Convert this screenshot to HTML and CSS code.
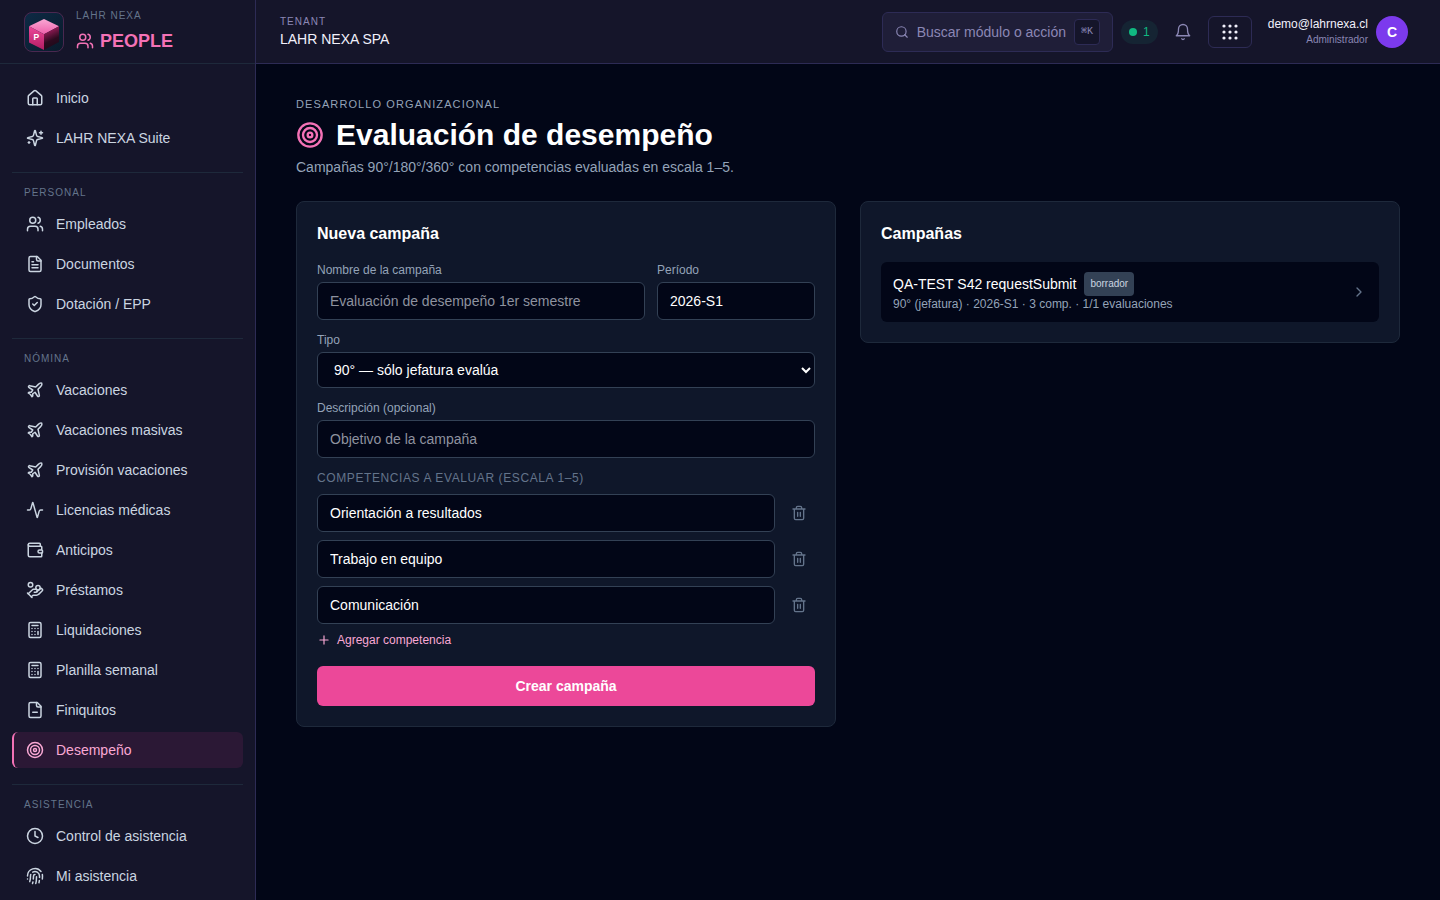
FILE: index.html
```html
<!DOCTYPE html>
<html lang="es">
<head>
  <meta charset="UTF-8">
  <title>LAHR NEXA People - Evaluación de desempeño</title>
  <link rel="stylesheet" href="styles.css">
</head>
<body>

  <!-- Shared icons -->
  <svg class="sprite" xmlns="http://www.w3.org/2000/svg">
    <symbol id="i-users" viewBox="0 0 24 24"><path d="M16 21v-2a4 4 0 0 0-4-4H6a4 4 0 0 0-4 4v2"/><circle cx="9" cy="7" r="4"/><path d="M22 21v-2a4 4 0 0 0-3-3.87"/><path d="M16 3.13a4 4 0 0 1 0 7.75"/></symbol>
    <symbol id="i-plane" viewBox="0 0 24 24"><path d="M17.8 19.2 16 11l3.5-3.5C21 6 21.5 4 21 3c-1-.5-3 0-4.5 1.5L13 8 4.8 6.2c-.5-.1-.9.1-1.1.5l-.3.5c-.2.5-.1 1 .3 1.3L9 12l-2 3H4l-1 1 3 2 2 3 1-1v-3l3-2 3.5 5.3c.3.4.8.5 1.3.3l.5-.2c.4-.3.6-.7.5-1.2z"/></symbol>
    <symbol id="i-calculator" viewBox="0 0 24 24"><rect width="16" height="20" x="4" y="2" rx="2"/><path d="M8 6h8M16 14v4M16 10h.01M12 10h.01M8 10h.01M12 14h.01M8 14h.01M12 18h.01M8 18h.01"/></symbol>
    <symbol id="i-target" viewBox="0 0 24 24"><circle cx="12" cy="12" r="10"/><circle cx="12" cy="12" r="6"/><circle cx="12" cy="12" r="2"/></symbol>
    <symbol id="i-trash" viewBox="0 0 24 24"><path d="M3 6h18M19 6v14c0 1-1 2-2 2H7c-1 0-2-1-2-2V6M8 6V4c0-1 1-2 2-2h4c1 0 2 1 2 2v2M10 11v6M14 11v6"/></symbol>
  </svg>

  <div class="layout">
    <aside class="sidebar">
      <div class="brand">
        <svg class="logo" viewBox="0 0 40 40">
          <defs>
            <linearGradient id="logoBg" x1="0" y1="0" x2="1" y2="1">
              <stop offset="0" stop-color="#0d2a45"/><stop offset="1" stop-color="#0a1a2a"/>
            </linearGradient>
            <linearGradient id="cubeTop" x1="0" y1="0" x2="0" y2="1">
              <stop offset="0" stop-color="#f9a8d4"/><stop offset="1" stop-color="#ee5faa"/>
            </linearGradient>
            <linearGradient id="cubeLeft" x1="0" y1="0" x2="0" y2="1">
              <stop offset="0" stop-color="#ec4899"/><stop offset="1" stop-color="#b01c62"/>
            </linearGradient>
            <linearGradient id="cubeRight" x1="0.3" y1="0" x2="0.6" y2="1">
              <stop offset="0.1" stop-color="#a01c5c"/><stop offset="0.6" stop-color="#2c0a1f"/><stop offset="1" stop-color="#1a0a18"/>
            </linearGradient>
          </defs>
          <rect class="logo-frame" x="0.5" y="0.5" width="39" height="39" rx="7.5"/>
          <path fill="url(#cubeTop)" d="M20 7 35 14.3 20 22.3 5 14.3z"/>
          <path fill="url(#cubeLeft)" d="M5 14.3 20 22.3V38L5 30.5z"/>
          <path fill="url(#cubeRight)" d="M35 14.3 20 22.3V38L35 30z"/>
          <text class="logo-letter" x="9.6" y="28.3">P</text>
        </svg>
        <div>
          <div class="brand-over">LAHR NEXA</div>
          <div class="brand-name">
            <svg class="icon"><use href="#i-users"/></svg>PEOPLE
          </div>
        </div>
      </div>

      <nav class="nav">
        <div class="nav-group">
          <a class="nav-item"><svg class="icon" viewBox="0 0 24 24"><path d="M15 21v-8a1 1 0 0 0-1-1h-4a1 1 0 0 0-1 1v8"/><path d="M3 10a2 2 0 0 1 .709-1.528l7-5.999a2 2 0 0 1 2.582 0l7 5.999A2 2 0 0 1 21 10v9a2 2 0 0 1-2 2H5a2 2 0 0 1-2-2z"/></svg>Inicio</a>
          <a class="nav-item"><svg class="icon" viewBox="0 0 24 24"><path d="M9.937 15.5A2 2 0 0 0 8.5 14.063l-6.135-1.582a.5.5 0 0 1 0-.962L8.5 9.936A2 2 0 0 0 9.937 8.5l1.582-6.135a.5.5 0 0 1 .963 0L14.063 8.5A2 2 0 0 0 15.5 9.937l6.135 1.581a.5.5 0 0 1 0 .964L15.5 14.063a2 2 0 0 0-1.437 1.437l-1.582 6.135a.5.5 0 0 1-.963 0z"/><path d="M20 3v4M22 5h-4M4 17v2M5 18H3"/></svg>LAHR NEXA Suite</a>
        </div>

        <div class="nav-group">
          <div class="nav-title">Personal</div>
          <a class="nav-item"><svg class="icon"><use href="#i-users"/></svg>Empleados</a>
          <a class="nav-item"><svg class="icon" viewBox="0 0 24 24"><path d="M15 2H6a2 2 0 0 0-2 2v16a2 2 0 0 0 2 2h12a2 2 0 0 0 2-2V7Z"/><path d="M14 2v4a2 2 0 0 0 2 2h4M10 9H8M16 13H8M16 17H8"/></svg>Documentos</a>
          <a class="nav-item"><svg class="icon" viewBox="0 0 24 24"><path d="M20 13c0 5-3.5 7.5-7.66 8.95a1 1 0 0 1-.67-.01C7.5 20.5 4 18 4 13V6a1 1 0 0 1 1-1c2 0 4.5-1.2 6.24-2.72a1.17 1.17 0 0 1 1.52 0C14.51 3.81 17 5 19 5a1 1 0 0 1 1 1z"/><path d="m9 12 2 2 4-4"/></svg>Dotación / EPP</a>
        </div>

        <div class="nav-group">
          <div class="nav-title">Nómina</div>
          <a class="nav-item"><svg class="icon"><use href="#i-plane"/></svg>Vacaciones</a>
          <a class="nav-item"><svg class="icon"><use href="#i-plane"/></svg>Vacaciones masivas</a>
          <a class="nav-item"><svg class="icon"><use href="#i-plane"/></svg>Provisión vacaciones</a>
          <a class="nav-item"><svg class="icon" viewBox="0 0 24 24"><path d="M22 12h-2.48a2 2 0 0 0-1.93 1.46l-2.35 8.36a.25.25 0 0 1-.48 0L9.24 2.18a.25.25 0 0 0-.48 0l-2.35 8.36A2 2 0 0 1 4.49 12H2"/></svg>Licencias médicas</a>
          <a class="nav-item"><svg class="icon" viewBox="0 0 24 24"><path d="M19 7V4a1 1 0 0 0-1-1H5a2 2 0 0 0 0 4h15a1 1 0 0 1 1 1v4h-3a2 2 0 0 0 0 4h3a1 1 0 0 0 1-1v-2a1 1 0 0 0-1-1"/><path d="M3 5v14a2 2 0 0 0 2 2h15a1 1 0 0 0 1-1v-4"/></svg>Anticipos</a>
          <a class="nav-item"><svg class="icon" viewBox="0 0 24 24"><path d="M11 15h2a2 2 0 1 0 0-4h-3c-.6 0-1.1.2-1.4.6L3 17"/><path d="m7 21 1.6-1.4c.3-.4.8-.6 1.4-.6h4c1.1 0 2.1-.4 2.8-1.2l4.6-4.4a2 2 0 0 0-2.75-2.91l-4.2 3.9"/><path d="m2 16 6 6"/><circle cx="16" cy="9" r="2.9"/><circle cx="6" cy="5" r="3"/></svg>Préstamos</a>
          <a class="nav-item"><svg class="icon"><use href="#i-calculator"/></svg>Liquidaciones</a>
          <a class="nav-item"><svg class="icon"><use href="#i-calculator"/></svg>Planilla semanal</a>
          <a class="nav-item"><svg class="icon" viewBox="0 0 24 24"><path d="M15 2H6a2 2 0 0 0-2 2v16a2 2 0 0 0 2 2h12a2 2 0 0 0 2-2V7Z"/><path d="M14 2v4a2 2 0 0 0 2 2h4M9 15h6"/></svg>Finiquitos</a>
          <a class="nav-item active"><svg class="icon"><use href="#i-target"/></svg>Desempeño</a>
        </div>

        <div class="nav-group">
          <div class="nav-title">Asistencia</div>
          <a class="nav-item"><svg class="icon" viewBox="0 0 24 24"><circle cx="12" cy="12" r="10"/><path d="M12 6v6l4 2"/></svg>Control de asistencia</a>
          <a class="nav-item"><svg class="icon" viewBox="0 0 24 24"><path d="M12 10a2 2 0 0 0-2 2c0 1.02-.1 2.51-.26 4"/><path d="M14 13.12c0 2.38 0 6.38-1 8.88"/><path d="M17.29 21.02c.12-.6.43-2.3.5-3.02"/><path d="M2 12a10 10 0 0 1 18-6"/><path d="M2 16h.01"/><path d="M21.8 16c.2-2 .131-5.354 0-6"/><path d="M5 19.5C5.5 18 6 15 6 12a6 6 0 0 1 .34-2"/><path d="M8.65 22c.21-.66.45-1.32.57-2"/><path d="M9 6.8a6 6 0 0 1 9 5.2v2"/></svg>Mi asistencia</a>
        </div>
      </nav>
    </aside>

    <div class="page">
      <header class="topbar">
        <div>
          <div class="tenant-label">Tenant</div>
          <div class="tenant-name">LAHR NEXA SPA</div>
        </div>

        <div class="topbar-right">
          <button class="search">
            <svg class="icon" viewBox="0 0 24 24"><circle cx="11" cy="11" r="8"/><path d="m21 21-4.3-4.3"/></svg>
            <span>Buscar módulo o acción</span>
            <kbd>⌘K</kbd>
          </button>
          <div class="online"><span class="dot"></span>1</div>
          <button class="bell">
            <svg class="icon" viewBox="0 0 24 24"><path d="M6 8a6 6 0 0 1 12 0c0 7 3 9 3 9H3s3-2 3-9"/><path d="M10.3 21a1.94 1.94 0 0 0 3.4 0"/></svg>
          </button>
          <button class="apps">
            <svg viewBox="0 0 18 18"><circle cx="3" cy="3" r="1.6"/><circle cx="9" cy="3" r="1.6"/><circle cx="15" cy="3" r="1.6"/><circle cx="3" cy="9" r="1.6"/><circle cx="9" cy="9" r="1.6"/><circle cx="15" cy="9" r="1.6"/><circle cx="3" cy="15" r="1.6"/><circle cx="9" cy="15" r="1.6"/><circle cx="15" cy="15" r="1.6"/></svg>
          </button>
          <div class="user">
            <div class="user-text">
              <div class="user-mail">demo@lahrnexa.cl</div>
              <div class="user-role">Administrador</div>
            </div>
            <div class="avatar">C</div>
          </div>
        </div>
      </header>

      <main class="content">
        <div class="eyebrow">Desarrollo organizacional</div>
        <h1><svg class="icon"><use href="#i-target"/></svg>Evaluación de desempeño</h1>
        <p class="lead">Campañas 90°/180°/360° con competencias evaluadas en escala 1–5.</p>

        <div class="columns">
          <form class="card">
            <h2>Nueva campaña</h2>
            <div class="form-grid">
              <div class="field wide">
                <label for="nombre">Nombre de la campaña</label>
                <input type="text" id="nombre" placeholder="Evaluación de desempeño 1er semestre">
              </div>
              <div class="field">
                <label for="periodo">Período</label>
                <input type="text" id="periodo" value="2026-S1">
              </div>
            </div>
            <div class="field">
              <label for="tipo">Tipo</label>
              <select id="tipo">
                <option>90° — sólo jefatura evalúa</option>
              </select>
            </div>
            <div class="field">
              <label for="descripcion">Descripción (opcional)</label>
              <input type="text" id="descripcion" placeholder="Objetivo de la campaña">
            </div>

            <div class="comp-title">Competencias a evaluar (escala 1–5)</div>
            <div class="comp-row">
              <input type="text" value="Orientación a resultados">
              <button type="button" class="trash"><svg class="icon"><use href="#i-trash"/></svg></button>
            </div>
            <div class="comp-row">
              <input type="text" value="Trabajo en equipo">
              <button type="button" class="trash"><svg class="icon"><use href="#i-trash"/></svg></button>
            </div>
            <div class="comp-row">
              <input type="text" value="Comunicación">
              <button type="button" class="trash"><svg class="icon"><use href="#i-trash"/></svg></button>
            </div>
            <button type="button" class="add-btn">
              <svg class="icon" viewBox="0 0 24 24"><path d="M5 12h14M12 5v14"/></svg>Agregar competencia
            </button>
            <button type="submit" class="submit-btn">Crear campaña</button>
          </form>

          <section class="card">
            <h2>Campañas</h2>
            <a class="campaign">
              <div>
                <div class="campaign-name">QA-TEST S42 requestSubmit<span class="badge">borrador</span></div>
                <div class="campaign-info">90° (jefatura) · 2026-S1 · 3 comp. · 1/1 evaluaciones</div>
              </div>
              <svg class="icon" viewBox="0 0 24 24"><path d="m9 18 6-6-6-6"/></svg>
            </a>
          </section>
        </div>
      </main>
    </div>
  </div>

</body>
</html>
```
FILE: styles.css
```css
* {
  margin: 0;
  padding: 0;
  box-sizing: border-box;
}

body {
  background-color: #020617;
  color: #fff;
  font-family: "Liberation Sans", Arial, sans-serif;
  font-size: 14px;
  line-height: 20px;
  height: 100vh;
  overflow: hidden;
}

button,
input,
select {
  font: inherit;
  color: inherit;
}

button {
  background: none;
  border: none;
  cursor: pointer;
}

.sprite { display: none; }

.icon {
  width: 18px;
  height: 18px;
  flex-shrink: 0;
  fill: none;
  stroke: currentColor;
  stroke-width: 2;
  stroke-linecap: round;
  stroke-linejoin: round;
}

.layout {
  display: flex;
  height: 100vh;
}

/* Sidebar */
.sidebar {
  width: 256px;
  flex-shrink: 0;
  background-color: #15152a;
  border-right: 1px solid #2d2b55;
  overflow: hidden;
}

.brand {
  display: flex;
  align-items: center;
  gap: 12px;
  height: 64px;
  padding: 0 24px;
  border-bottom: 1px solid #1e293b;
}

.logo {
  width: 40px;
  height: 40px;
}

.logo-frame {
  fill: url(#logoBg);
  stroke: #4a2850;
}

.logo-letter {
  fill: #fff;
  font-size: 8.5px;
  font-weight: 700;
}

.brand-over {
  font-size: 10px;
  line-height: 15px;
  letter-spacing: 1px;
  color: #64748b;
}

.brand-name {
  display: flex;
  align-items: center;
  gap: 6px;
  margin-top: 4px;
  font-size: 18px;
  line-height: 28px;
  font-weight: 700;
  color: #f472b6;
}

.nav {
  padding: 16px 12px;
}

.nav-group {
  display: flex;
  flex-direction: column;
  gap: 4px;
}

.nav-group + .nav-group {
  margin-top: 16px;
  padding-top: 12px;
  border-top: 1px solid #1e293b;
}

.nav-title {
  padding: 0 12px;
  margin-bottom: 2px;
  font-size: 10px;
  line-height: 15px;
  letter-spacing: 1px;
  text-transform: uppercase;
  color: #64748b;
}

.nav-item {
  display: flex;
  align-items: center;
  gap: 12px;
  height: 36px;
  padding: 0 12px;
  border-left: 2px solid transparent;
  border-radius: 6px;
  color: #cbd5e1;
}

.nav-item.active {
  background-color: #2b1835;
  border-left-color: #f472b6;
  color: #f9a8d4;
}

/* Topbar */
.page {
  flex: 1;
  min-width: 0;
}

.topbar {
  display: flex;
  align-items: center;
  justify-content: space-between;
  height: 64px;
  padding: 0 32px 0 24px;
  background-color: #15152a;
  border-bottom: 1px solid #2d2b55;
}

.tenant-label {
  font-size: 10px;
  line-height: 15px;
  letter-spacing: 1px;
  text-transform: uppercase;
  color: #8b87b5;
}

.tenant-name { color: #f1f0fb; }

.topbar-right {
  display: flex;
  align-items: center;
  gap: 8px;
}

.search {
  display: flex;
  align-items: center;
  gap: 8px;
  height: 40px;
  padding: 0 12px;
  background-color: #1f1e38;
  border: 1px solid #2d2b55;
  border-radius: 6px;
  color: #8b87b5;
}

.search .icon {
  width: 14px;
  height: 14px;
}

.search kbd {
  height: 26px;
  padding: 0 6px;
  background-color: #15152a;
  border: 1px solid #2d2b55;
  border-radius: 4px;
  font-family: "Liberation Mono", monospace;
  font-size: 10px;
  line-height: 24px;
}

.online {
  display: flex;
  align-items: center;
  gap: 6px;
  height: 24px;
  padding: 0 8px;
  border-radius: 12px;
  background-color: #152433;
  color: #10b981;
  font-size: 12px;
}

.dot {
  width: 8px;
  height: 8px;
  border-radius: 50%;
  background-color: #10b981;
}

.bell {
  display: flex;
  padding: 8px;
  color: #8b87b5;
}

.bell .icon { stroke-width: 1.75; }

.apps {
  display: flex;
  align-items: center;
  justify-content: center;
  width: 44px;
  height: 32px;
  border: 1px solid #2d2b55;
  border-radius: 6px;
}

.apps svg {
  width: 18px;
  height: 18px;
  fill: #f1f0fb;
}

.user {
  display: flex;
  align-items: center;
  gap: 8px;
  margin-left: 8px;
  text-align: right;
}

.user-mail {
  font-size: 12px;
  line-height: 16px;
  color: #f1f0fb;
}

.user-role {
  font-size: 10px;
  line-height: 15px;
  color: #8b87b5;
}

.avatar {
  width: 32px;
  height: 32px;
  border-radius: 50%;
  background-color: #7c3aed;
  font-weight: 700;
  line-height: 32px;
  text-align: center;
}

/* Content */
.content {
  padding: 32px 40px;
}

.eyebrow {
  font-size: 11px;
  line-height: 17px;
  letter-spacing: 1.1px;
  text-transform: uppercase;
  color: #94a3b8;
}

h1 {
  display: flex;
  align-items: center;
  gap: 12px;
  margin-top: 4px;
  font-size: 30px;
  line-height: 36px;
}

h1 .icon {
  width: 28px;
  height: 28px;
  color: #f472b6;
}

.lead {
  margin-top: 4px;
  color: #94a3b8;
}

.columns {
  display: grid;
  grid-template-columns: 1fr 1fr;
  align-items: start;
  gap: 24px;
  margin-top: 24px;
}

.card {
  padding: 20px;
  background-color: #0f172a;
  border: 1px solid #1e293b;
  border-radius: 8px;
}

.card h2 {
  margin-bottom: 16px;
  font-size: 16px;
  line-height: 24px;
}

.form-grid {
  display: grid;
  grid-template-columns: repeat(3, 1fr);
  gap: 12px;
}

.wide { grid-column: span 2; }

.field { margin-bottom: 12px; }

label {
  display: block;
  margin-bottom: 4px;
  font-size: 12px;
  line-height: 16px;
  color: #94a3b8;
}

input,
select {
  display: block;
  width: 100%;
  height: 38px;
  padding: 8px 12px;
  background-color: #020617;
  border: 1px solid #334155;
  border-radius: 6px;
}

select { height: 36px; }

input::placeholder { color: #8e929f; }

.comp-title {
  margin-bottom: 8px;
  font-size: 12px;
  line-height: 16px;
  letter-spacing: 0.6px;
  text-transform: uppercase;
  color: #64748b;
}

.comp-row {
  display: flex;
  align-items: center;
  gap: 8px;
  margin-bottom: 8px;
}

.trash {
  display: flex;
  padding: 8px;
  color: #64748b;
}

.trash .icon {
  width: 16px;
  height: 16px;
}

.add-btn {
  display: flex;
  align-items: center;
  gap: 6px;
  font-size: 12px;
  line-height: 16px;
  color: #f9a8d4;
}

.add-btn .icon {
  width: 14px;
  height: 14px;
}

.submit-btn {
  width: 100%;
  height: 40px;
  margin-top: 18px;
  border-radius: 6px;
  background-color: #ec4899;
  font-weight: 700;
}

.campaign {
  display: flex;
  align-items: center;
  justify-content: space-between;
  padding: 10px 12px;
  border-radius: 6px;
  background-color: #020617;
}

.campaign .icon {
  width: 16px;
  height: 16px;
  color: #64748b;
}

.campaign-name {
  display: flex;
  gap: 8px;
  line-height: 24px;
}

.badge {
  padding: 0 6px;
  border-radius: 4px;
  background-color: #334155;
  color: #cbd5e1;
  font-size: 10px;
}

.campaign-info {
  font-size: 12px;
  line-height: 16px;
  color: #94a3b8;
}
```
